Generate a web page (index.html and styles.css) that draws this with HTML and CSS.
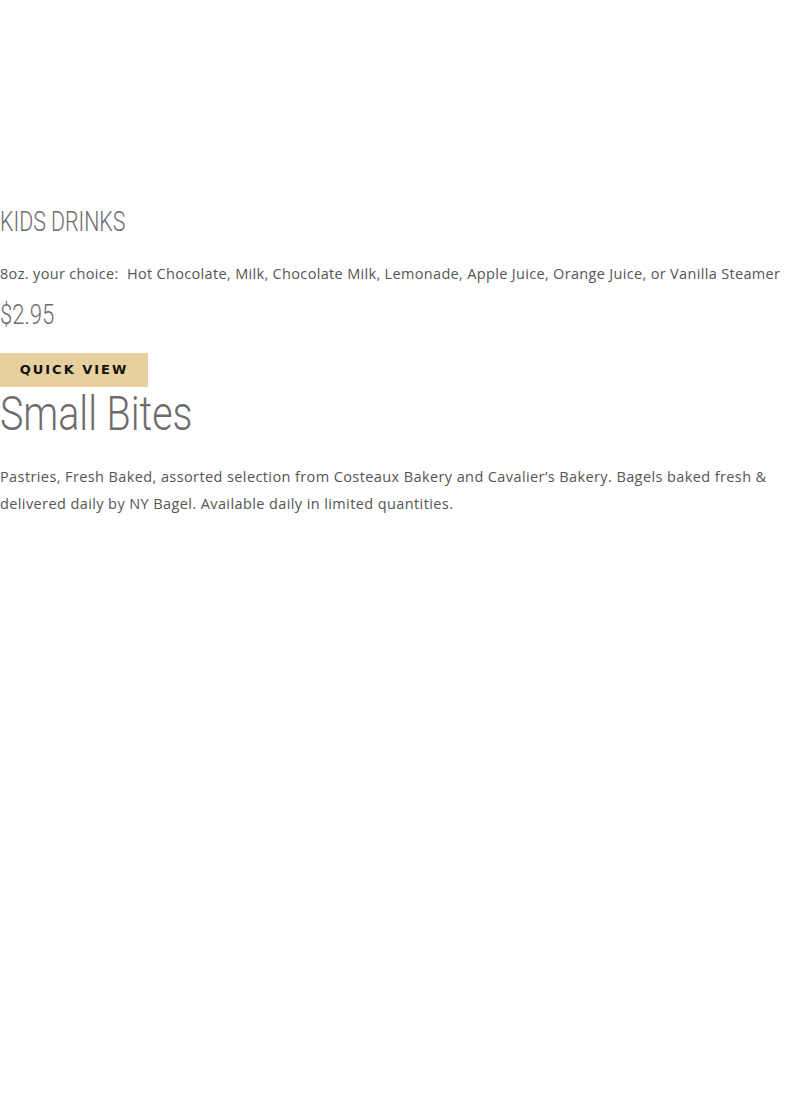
FILE: index.html
```html
<!DOCTYPE html>
<html>
<head>
<meta charset="utf-8">
<link rel="stylesheet" href="styles.css">
</head>
<body>
<div class="page">
  <section class="item">
    <h3 class="item-title"><span class="cond">KIDS DRINKS</span></h3>
    <p class="item-desc">8oz. your choice:&nbsp; Hot Chocolate, Milk, Chocolate Milk, Lemonade, Apple Juice, Orange Juice, or Vanilla Steamer</p>
    <div class="item-price"><span class="cond">$2.95</span></div>
    <a class="quick-view">QUICK VIEW</a>
  </section>
  <section class="category">
    <h2 class="cat-title"><span class="cond wide">Small Bites</span></h2>
    <p class="cat-desc">Pastries, Fresh Baked, assorted selection from Costeaux Bakery and Cavalier’s Bakery. Bagels baked fresh &amp; delivered daily by NY Bagel. Available daily in limited quantities.</p>
  </section>
</div>
</body>
</html>
```
FILE: styles.css
```css
html, body { margin: 0; padding: 0; background: #fff; }
.page { padding-top: 205px; width: 785px; }
.cond { display: inline-block; transform: scaleX(0.79); transform-origin: left center; font-family: Roboto, sans-serif; font-weight: 300; color: #6d6d6d; }
.cond.wide { transform: scaleX(0.82); }
.item-title { margin: 0; font-size: 27px; line-height: 34px; font-weight: 300; }
.item-desc { margin: 21px 0 0; font-family: "Open Sans", sans-serif; font-size: 14.5px; letter-spacing: 0.33px; line-height: 28px; color: #555; white-space: nowrap; }
.item-price { margin-top: 10px; font-size: 28px; line-height: 34px; }
.quick-view { display: inline-block; margin-top: 21px; background: #e8d09e; color: #111; font-family: "DejaVu Sans", sans-serif; font-weight: 700; font-size: 13px; letter-spacing: 2px; height: 34px; line-height: 34px; width: 148px; text-align: center; box-sizing: border-box; }
.cat-title { margin: 2px 0 0; font-size: 48px; line-height: 50px; font-weight: 300; }
.cat-desc { margin: 24px 0 0; font-family: "Open Sans", sans-serif; font-size: 14.5px; letter-spacing: 0.4px; line-height: 27px; color: #555; }
```
